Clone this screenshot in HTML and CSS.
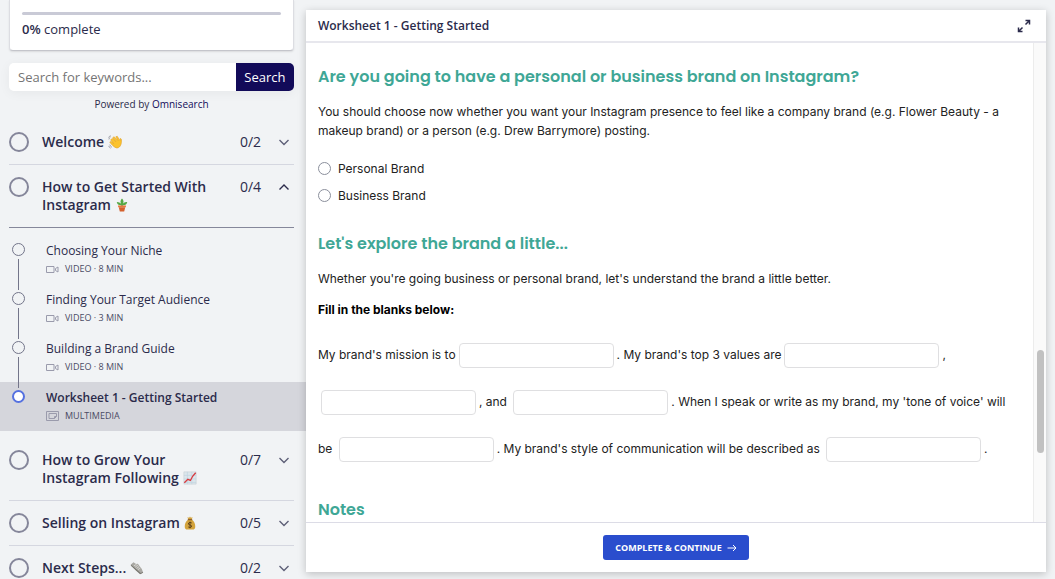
FILE: index.html
```html
<!DOCTYPE html>
<html lang="en">
<head>
    <meta charset="utf-8">
    <title>Worksheet 1 - Getting Started</title>
    <link rel="stylesheet" href="styles.css">
</head>
<body>
    <svg class="sprite" aria-hidden="true">
        <symbol id="down" viewBox="0 0 12 10"><path d="M1.500 3L6 7.500 10.500 3"/></symbol>
        <symbol id="up" viewBox="0 0 12 10"><path d="M1.500 7.500L6 3l4.500 4.500"/></symbol>
        <symbol id="video" viewBox="0 0 13 9"><path d="M.5 1.500h7.500v6h-7.500zM9.500 3.500l2.500-1.500v5l-2.500-1.500z"/></symbol>
    </svg>
    <aside class="sidebar">
        <div class="progress-card">
            <div class="progress-bar"></div>
            <p><strong>0%</strong> complete</p>
        </div>
        <form class="search">
            <input type="text" placeholder="Search for keywords..." aria-label="Search for keywords">
            <button type="button">Search</button>
        </form>
        <p class="powered">Powered by <a href="#">Omnisearch</a></p>

        <section class="chapter">
            <span class="circle"></span>
            <h2>Welcome
                <svg class="emoji" viewBox="0 0 16 16"><path d="M3 5.500L5 4l4 3.500L5.500 3 7 2l4.500 4.500L9 2l1.500-.6 3.200 4.900.3-2.300c1.500.2 1.500 1.500 1.400 3C15.300 12 13 15 9.800 14.800 7.500 14.500 3.500 10.500 2 8l1.500-.6 3 2.500z" fill="#fcc32c" stroke="#dfa12a" stroke-width=".7"/><path d="M1 5q.3-2 2-3M3 .8Q1.300 1.500.3 3M2 11q.5 2 2.500 3M.8 12.500Q1.500 14.500 3 15" fill="none" stroke="#8c8e98" stroke-width=".9"/></svg>
            </h2>
            <span class="count">0/2</span>
            <button type="button" class="toggle" aria-label="Expand Welcome"><svg><use href="#down"/></svg></button>
        </section>
        <section class="chapter open">
            <span class="circle"></span>
            <h2>How to Get Started With Instagram
                <svg class="emoji" viewBox="0 0 16 16"><path d="M8 9V3" stroke="#39843b" stroke-width="1.500"/><path d="M8 8Q3 9 2 4.500q4 0 6 3.500Q4.500 4 8 .5q3.500 3.500 0 7.500 2-4 6-3.500Q13 9 8 8z" fill="#55a846"/><path d="M3.500 8.500h9v2h-9z" fill="#e8793e"/><path d="M4.300 10.500h7.400l-1.200 5h-5z" fill="#d4602d"/></svg>
            </h2>
            <span class="count">0/4</span>
            <button type="button" class="toggle" aria-label="Collapse How to Get Started With Instagram"><svg><use href="#up"/></svg></button>
        </section>
        <ul class="lessons">
            <li>
                <div class="track"><span class="dot"></span><span class="line"></span></div>
                <a href="#">Choosing Your Niche
                    <small><svg><use href="#video"/></svg>VIDEO · 8 MIN</small>
                </a>
            </li>
            <li>
                <div class="track"><span class="dot"></span><span class="line"></span></div>
                <a href="#">Finding Your Target Audience
                    <small><svg><use href="#video"/></svg>VIDEO · 3 MIN</small>
                </a>
            </li>
            <li>
                <div class="track"><span class="dot"></span><span class="line"></span></div>
                <a href="#">Building a Brand Guide
                    <small><svg><use href="#video"/></svg>VIDEO · 8 MIN</small>
                </a>
            </li>
            <li class="current">
                <div class="track"><span class="dot"></span></div>
                <a href="#">Worksheet 1 - Getting Started
                    <small><svg viewBox="0 0 13 10"><path d="M.5.5h12v9H.5zM3 2.500h7.500v3L8.500 7.500H3zM10.500 5.500h-2v2"/></svg>MULTIMEDIA</small>
                </a>
            </li>
        </ul>
        <section class="chapter">
            <span class="circle"></span>
            <h2>How to Grow Your Instagram Following
                <svg class="emoji" viewBox="0 0 16 16"><path d="M1 1h14v14H1z" fill="#dce6ec" stroke="#c1cbd1" stroke-width=".6"/><path d="M1 5h14M1 9h14M1 13h14M5 1v14M10 1v14" stroke="#bfd3df" stroke-width=".7"/><path d="M1.500 13.500l4-4 3 1.300L11 6l3.500-4" fill="none" stroke="#d83a3f" stroke-width="1.500"/></svg>
            </h2>
            <span class="count">0/7</span>
            <button type="button" class="toggle" aria-label="Expand How to Grow Your Instagram Following"><svg><use href="#down"/></svg></button>
        </section>
        <section class="chapter">
            <span class="circle"></span>
            <h2>Selling on Instagram
                <svg class="emoji" viewBox="0 0 16 16"><path d="M6 4L5 1.500 7 2l1-1.500L9 2l2-.5L10 4c3 2 4 5 4 8 0 2.500-1 3.500-3 3.500H5c-2 0-3-1-3-3.500 0-3 1-6 4-8z" fill="#d3a33c"/><path d="M5.500 4.200h5" stroke="#8c5b29" stroke-width="1.300"/><path d="M10 8Q8 6.500 6.500 8t1.500 2.300 1.500 2.200-3.500 0M8 6.500v7.500" fill="none" stroke="#5d421b" stroke-width="1.100"/></svg>
            </h2>
            <span class="count">0/5</span>
            <button type="button" class="toggle" aria-label="Expand Selling on Instagram"><svg><use href="#down"/></svg></button>
        </section>
        <section class="chapter">
            <span class="circle"></span>
            <h2>Next Steps...
                <svg class="emoji" viewBox="0 0 16 16"><path d="M1 4l3-2.500 3 2 2-.5 4.500 6 1.500 4-2.500 1.500L7 11z" fill="#aaa9a4"/><path d="M1 4v1.500L11.500 15l3.500-1.500-.3-1-2.500 1.200z" fill="#77766f"/><path d="M4.500 5.500l3-1.800M6 7l3-2.300M7.500 8.500l3-2.200M9 10l2.800-2" stroke="#e8e7e2" stroke-width=".8"/></svg>
            </h2>
            <span class="count">0/2</span>
            <button type="button" class="toggle" aria-label="Expand Next Steps"><svg><use href="#down"/></svg></button>
        </section>
    </aside>

    <main class="panel">
        <header>
            <h1>Worksheet 1 - Getting Started</h1>
            <button type="button" class="expand" aria-label="Full screen">
                <svg viewBox="0 0 14 14"><path d="M8.500 1.500h4v4M12 2L8.500 5.500M5.500 12.500h-4v-4M2 12l3.500-3.500"/></svg>
            </button>
        </header>
        <div class="content">
            <div class="worksheet">
                <h2>Are you going to have a personal or business brand on Instagram?</h2>
                <p>You should choose now whether you want your Instagram presence to feel like a company brand (e.g. Flower Beauty - a makeup brand) or a person (e.g. Drew Barrymore) posting.</p>
                <div class="choices">
                    <label><input type="radio" name="brand">Personal Brand</label>
                    <label><input type="radio" name="brand">Business Brand</label>
                </div>
                <h2>Let's explore the brand a little...</h2>
                <p>Whether you're going business or personal brand, let's understand the brand a little better.</p>
                <p><strong>Fill in the blanks below:</strong></p>
                <p class="blanks">My brand's mission is to<input type="text" aria-label="Mission">. My brand's top 3 values are<input type="text" aria-label="First value">, <input type="text" aria-label="Second value">, and <input type="text" aria-label="Third value">. When I speak or write as my brand, my 'tone of voice' will be <input type="text" aria-label="Tone of voice">. My brand's style of communication will be described as <input type="text" aria-label="Style of communication">.</p>
                <h2>Notes</h2>
            </div>
            <div class="scrollbar"><span class="thumb"></span></div>
        </div>
        <footer>
            <button type="button" class="complete">COMPLETE &amp; CONTINUE
                <svg viewBox="0 0 10 8"><path d="M.5 4h8.500M6 1l3 3-3 3"/></svg>
            </button>
        </footer>
    </main>
</body>
</html>
```
FILE: styles.css
```css
* {
    box-sizing: border-box;
}
body {
    margin: 0;
    height: 100vh;
    display: flex;
    overflow: hidden;
    background-color: #f1f3f5;
    color: #2b2b4b;
    font-family: "Open Sans", sans-serif;
    font-size: 13px;
}
h1, h2, p, ul {
    margin: 0;
    padding: 0;
}
a {
    color: inherit;
    text-decoration: none;
}
button {
    border: none;
    padding: 0;
    background: none;
    font-family: inherit;
    cursor: pointer;
}
svg {
    fill: none;
    stroke: currentColor;
}
.emoji {
    stroke: none;
}
.sprite {
    display: none;
}

/* sidebar */
.sidebar {
    flex: 0 0 29%;
    overflow: hidden;
}
.progress-card {
    height: 51px;
    margin: 0 12px 12px 9px;
    padding: 12px 12px 0;
    background-color: white;
    border: 1px solid #dcdde2;
    border-top: none;
    border-bottom-color: #c4c5cb;
    border-radius: 0 0 4px 4px;
    box-shadow: 0 1px 2px rgba(0, 0, 0, 0.1);
}
.progress-bar {
    height: 3px;
    border-radius: 2px;
    background-color: #c9cad6;
}
.progress-card p {
    line-height: 18px;
    margin-top: 5px;
}
.progress-card strong {
    font-weight: 600;
}
.search {
    display: flex;
    height: 28px;
    margin: 0 12px 0 9px;
    border-radius: 5px;
    overflow: hidden;
    box-shadow: 0 2px 12px rgba(0, 0, 0, 0.05);
}
.search input {
    flex: 1;
    min-width: 0;
    border: none;
    padding: 0 9px;
    background-color: white;
    font: inherit;
}
.search input::placeholder {
    color: #757575;
}
.search button {
    width: 58px;
    background-color: #120b59;
    color: white;
    font-size: 13px;
}
.powered {
    margin: 4px 12px 7px 9px;
    text-align: center;
    font-size: 10px;
    line-height: 18px;
}
.powered a {
    color: #120b59;
}
.chapter {
    display: flex;
    align-items: flex-start;
    margin: 0 12px 0 9px;
    padding: 13px 0;
    border-bottom: 1px solid #d5d7e0;
}
.chapter.open {
    border-color: #85879a;
}
.circle {
    width: 20px;
    height: 20px;
    flex: none;
    margin: -1px 13px -1px 0;
    border: 2px solid #85869a;
    border-radius: 50%;
}
.chapter h2 {
    flex: 1;
    padding-right: 24px;
    font-size: 14px;
    font-weight: 600;
    line-height: 18px;
}
.emoji {
    width: 14px;
    height: 14px;
    vertical-align: -2px;
}
.count {
    width: 38px;
    font-size: 14px;
    line-height: 18px;
}
.toggle {
    width: 12px;
    height: 18px;
    margin-right: 4px;
    display: flex;
    align-items: center;
    color: #5e6078;
}
.open .toggle {
    color: #2b2b4b;
}
.toggle svg {
    width: 12px;
    height: 10px;
    stroke-width: 1.4;
}
.lessons {
    list-style: none;
    padding: 7px 0;
}
.lessons li {
    display: flex;
    height: 49px;
    padding-left: 12px;
}
.track {
    width: 13px;
    margin-right: 21px;
    display: flex;
    flex-direction: column;
    align-items: center;
}
.dot {
    flex: none;
    width: 13px;
    height: 13px;
    margin-top: 8px;
    border: 1px solid #73758a;
    border-radius: 50%;
}
.line {
    flex: none;
    width: 1px;
    height: 31px;
    margin-top: 3px;
    background-color: #73758a;
}
.lessons a {
    padding-top: 7px;
    font-size: 12px;
    line-height: 18px;
}
.lessons small {
    display: flex;
    align-items: center;
    gap: 6px;
    font-size: 9px;
    line-height: 18px;
    color: #4a4b64;
}
.lessons small svg {
    width: 13px;
    height: 9px;
    color: #9a9bac;
}
.current {
    background-color: #d5d6dc;
}
.current a {
    font-weight: 600;
}
.current small {
    font-weight: 400;
}
.lessons .current svg {
    height: 10px;
}
.current .dot {
    border: 2px solid #5571e0;
    background-color: white;
}

/* worksheet panel */
.panel {
    flex: 1;
    min-width: 0;
    margin: 10px 9px 7px 0;
    display: flex;
    flex-direction: column;
    background-color: white;
    box-shadow: 0 2px 8px rgba(0, 0, 0, 0.22);
}
.panel header {
    display: flex;
    align-items: center;
    justify-content: space-between;
    height: 33px;
    flex: none;
    padding: 0 15px 0 12px;
    border-bottom: 2px solid #e7e7ed;
}
.panel h1 {
    font-size: 12px;
    font-weight: 600;
}
.expand {
    height: 14px;
    color: #2b2b4b;
}
.expand svg {
    width: 14px;
    height: 14px;
    stroke-width: 1.5;
}
.content {
    flex: 1;
    min-height: 0;
    display: flex;
    overflow: hidden;
}
.worksheet {
    flex: 1;
    padding: 22px 15px 0 12px;
    color: #222;
    font-family: Inter, sans-serif;
    font-size: 12px;
    line-height: 19px;
}
.worksheet h2 {
    margin-bottom: 13px;
    color: #3fa796;
    font-family: Poppins, Inter, sans-serif;
    font-size: 16px;
    font-weight: 600;
    line-height: 24px;
}
.worksheet p {
    margin-bottom: 12px;
}
.worksheet strong {
    color: black;
}
.choices {
    display: flex;
    flex-direction: column;
    gap: 8px;
    margin: 19px 0 27px;
}
.choices label {
    display: flex;
    align-items: center;
    gap: 7px;
}
.choices input {
    appearance: none;
    width: 13px;
    height: 13px;
    margin: 0;
    border: 1px solid #8b8f9c;
    border-radius: 50%;
}
.worksheet .blanks {
    margin-bottom: 26px;
    line-height: 47px;
}
.blanks input {
    width: 155px;
    height: 25px;
    margin: 0 3px;
    border: 1px solid #dfdfe1;
    border-radius: 4px;
    vertical-align: middle;
}
.scrollbar {
    width: 13px;
    display: flex;
    flex-direction: column;
    align-items: center;
    background-color: #fafafa;
    border-left: 1px solid #ececec;
}
.scrollbar::before {
    content: "";
    flex: 307;
}
.scrollbar::after {
    content: "";
    flex: 69;
}
.thumb {
    flex: 103;
    width: 7px;
    border-radius: 4px;
    background-color: #c1c1c1;
}
.panel footer {
    flex: none;
    display: flex;
    justify-content: center;
    padding: 12px;
    border-top: 1px solid #dcdce6;
}
.complete {
    display: flex;
    align-items: center;
    gap: 5px;
    height: 25px;
    padding: 0 12px;
    border-radius: 3px;
    background-color: #2a4dcd;
    color: white;
    font-size: 9px;
    font-weight: 700;
}
.complete svg {
    width: 10px;
    height: 8px;
}
```
